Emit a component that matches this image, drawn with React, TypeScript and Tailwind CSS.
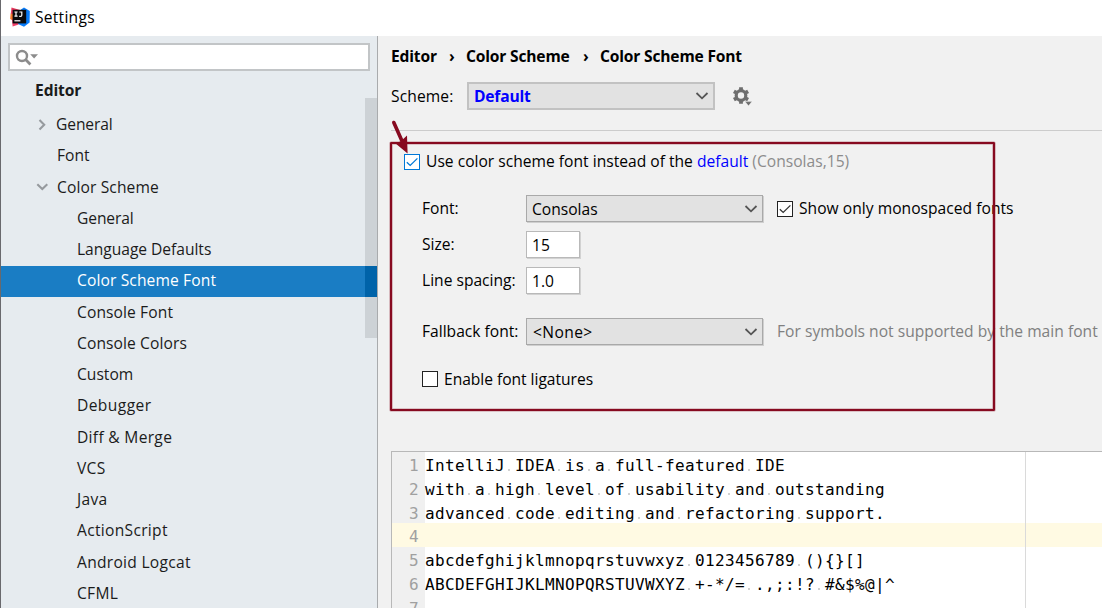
import React from 'react';

interface TreeItem {
    label: string;
    indent: string;
    arrow?: 'right' | 'down';
    selected?: boolean;
}

const treeItems: TreeItem[] = [
    { label: 'General', indent: 'pl-[55px] tracking-[-0.1px]', arrow: 'right' },
    { label: 'Font', indent: 'pl-[56px]' },
    { label: 'Color Scheme', indent: 'pl-[56px] tracking-[0.12px]', arrow: 'down' },
    { label: 'General', indent: 'pl-[76px] tracking-[-0.1px]' },
    { label: 'Language Defaults', indent: 'pl-[76px] tracking-[-0.03px]' },
    { label: 'Color Scheme Font', indent: 'pl-[76px] tracking-[0.12px]', selected: true },
    { label: 'Console Font', indent: 'pl-[76px] tracking-[0.1px]' },
    { label: 'Console Colors', indent: 'pl-[76px] tracking-[0.1px]' },
    { label: 'Custom', indent: 'pl-[76px]' },
    { label: 'Debugger', indent: 'pl-[76px] tracking-[0.4px]' },
    { label: 'Diff & Merge', indent: 'pl-[76px] tracking-[0.3px]' },
    { label: 'VCS', indent: 'pl-[76px] tracking-[0.3px]' },
    { label: 'Java', indent: 'pl-[76px] tracking-[0.3px]' },
    { label: 'ActionScript', indent: 'pl-[76px] tracking-[0.3px]' },
    { label: 'Android Logcat', indent: 'pl-[76px] tracking-[0.27px]' },
    { label: 'CFML', indent: 'pl-[76px] tracking-[0.3px]' },
];

const codeLines = [
    'IntelliJ IDEA is a full-featured IDE',
    'with a high level of usability and outstanding',
    'advanced code editing and refactoring support.',
    '',
    'abcdefghijklmnopqrstuvwxyz 0123456789 (){}[]',
    'ABCDEFGHIJKLMNOPQRSTUVWXYZ +-*/= .,;:!? #&$%@|^',
    '',
];

const Logo = () => (
    <svg width="20" height="20" viewBox="0 0 20 20" className="shrink-0">
        <path d="M1.5 0.5 L10 3 L6 10 L0.8 7 Z" fill="#e8365d" />
        <path d="M0.6 6.5 L6 8 L5 15 L0.2 12 Z" fill="#f97a2b" />
        <path d="M2 12 L11 15 L8 17.8 L2.6 19.6 Z" fill="#f0406a" />
        <path d="M11 2.5 L14 0.4 L19.8 4 L19.6 15.5 L14 19.8 L8 17 Z" fill="#087cfa" />
        <rect x="2.6" y="2.8" width="13.6" height="13.6" fill="#0b0b0d" />
        <path d="M4.4 5 H7.6 M6 5 V9.2 M4.4 9.2 H7.6 M9.4 5 H11.8 V8.2 Q11.8 9.3 10.5 9.3 H9.2" stroke="#fff" strokeWidth="1.2" fill="none" />
        <rect x="4.4" y="13.2" width="6" height="1.2" fill="#fff" />
    </svg>
);

const Chevron = ({ className }: { className: string }) => (
    <svg width="14" height="8" viewBox="0 0 14 8" className={className}>
        <path d="M1.5 1 L7 6.3 L12.5 1" fill="none" stroke="currentColor" strokeWidth="1.8" />
    </svg>
);

const TreeArrow = ({ direction }: { direction: 'right' | 'down' }) => (
    <svg width="12" height="12" viewBox="0 0 12 12" className="absolute left-[35px] top-[9px] text-[#969a9e]">
        <path
            d={direction === 'right' ? 'M3.5 1 L8.2 5.7 L3.5 10.4' : 'M1.3 3.2 L6.3 8 L11.3 3.2'}
            fill="none"
            stroke="currentColor"
            strokeWidth="2.1"
        />
    </svg>
);

const Checkbox = ({ checked, accent }: { checked?: boolean; accent?: boolean }) => (
    <span
        className={`flex h-4 w-4 shrink-0 items-center justify-center border bg-white ${
            accent ? 'border-[#0078d7] text-[#0078d7]' : 'border-[#222222] text-[#333333]'
        }`}
    >
        {checked && (
            <svg width="14" height="14" viewBox="0 0 14 14">
                <path d="M1.8 7.2 L5.2 10.4 L12.4 3.4" fill="none" stroke="currentColor" strokeWidth="1.3" />
            </svg>
        )}
    </span>
);

const Select = ({ children, className }: { children: React.ReactNode; className: string }) => (
    <div className={`flex items-center justify-between bg-[#e2e2e2] ${className}`}>
        <span>{children}</span>
        <Chevron className="text-[#555555]" />
    </div>
);

const TextField = ({ value }: { value: string }) => (
    <div className="mb-px flex h-[27px] w-[54px] items-center border border-[#b9b9b9] bg-white pl-[5px] shadow-[1px_1px_0_#d2d2d2]">
        {value}
    </div>
);

const formSelect =
    'mb-px h-[27px] w-[237px] border border-[#a9a9a9] pl-[5px] pr-[4px] shadow-[1px_1px_0_#cfcfcf]';

const Sidebar = () => (
    <aside className="relative flex w-[378px] shrink-0 flex-col overflow-hidden border-l border-r border-l-[#69696d] border-r-[#a9abad] bg-[#e6ebef] text-[#1b1b1b]">
        <div className="ml-[7px] mt-[7px] flex h-7 w-[362px] shrink-0 items-center border-2 border-[#c2c5c7] bg-white pl-[5px]">
            <svg width="24" height="17" viewBox="0 0 24 17" className="text-[#8c8c8c]">
                <circle cx="7" cy="7" r="5" fill="none" stroke="currentColor" strokeWidth="2.4" />
                <path d="M10.6 10.6 L15.4 15.4" stroke="currentColor" strokeWidth="2.8" />
                <path d="M15.2 5.2 H23 L19.1 9.4 Z" fill="currentColor" />
            </svg>
        </div>
        <div className="flex h-[38.7px] shrink-0 items-center pl-[34px] font-bold tracking-[-0.1px]">Editor</div>
        {treeItems.map((item, i) => (
            <div
                key={i}
                className={`relative flex h-[31.25px] shrink-0 items-center pb-[2.5px] ${item.indent} ${
                    item.selected ? 'bg-[#1a7dc4] text-white' : ''
                }`}
            >
                {item.arrow && <TreeArrow direction={item.arrow} />}
                {item.label}
            </div>
        ))}
        {/* Scrollbar thumb */}
        <div className="absolute right-0 top-[62px] h-[240px] w-3 bg-[#cdd2d6]">
            <div className="mt-[168px] h-[31px] bg-[#0063a9]" />
        </div>
    </aside>
);

const Breadcrumbs = () => (
    <div className="flex h-[21px] items-center pb-px font-bold tracking-[-0.18px]">
        <span className="w-[58px]">Editor</span>
        <span className="w-[17px]">›</span>
        <span className="w-[117px]">Color Scheme</span>
        <span className="w-[17px]">›</span>
        <span>Color Scheme Font</span>
    </div>
);

const FontForm = () => (
    <section className="flex flex-col pl-[13px]">
        <div className="flex h-[22px] items-center">
            <Checkbox checked accent />
            <span className="ml-[6px] whitespace-pre pb-[2px] tracking-[0.01px]">
                Use color scheme font instead of the <a className="text-[#0000ff]">default</a>
                <span className="text-[#8c8c8c]"> (Consolas,15)</span>
            </span>
        </div>
        <div className="mt-[22px] flex h-7 items-center pl-[18px]">
            <span className="w-[104px] pb-[2px]">Font:</span>
            <Select className={formSelect}>Consolas</Select>
            <span className="ml-[14px] flex items-center gap-[6px]">
                <Checkbox checked />
                <span className="pb-[2px] tracking-[0.03px]">Show only monospaced fonts</span>
            </span>
        </div>
        <div className="mt-2 flex h-7 items-center pl-[18px]">
            <span className="w-[104px] pb-[2px]">Size:</span>
            <TextField value="15" />
        </div>
        <div className="mt-2 flex h-7 items-center pl-[18px]">
            <span className="w-[104px] pb-[2px]">Line spacing:</span>
            <TextField value="1.0" />
        </div>
        <div className="mt-[23px] flex h-7 items-center pl-[18px]">
            <span className="w-[104px] pb-[2px]">Fallback font:</span>
            <Select className={formSelect}>
                <span className="ml-px tracking-[0.4px]">&lt;None&gt;</span>
            </Select>
            <span className="ml-[14px] pb-[2px] tracking-[0.02px] text-[#808080]">
                For symbols not supported by the main font
            </span>
        </div>
        <div className="mt-[22px] flex h-[22px] items-center gap-[6px] pl-[18px]">
            <Checkbox />
            <span className="tracking-[-0.03px]">Enable font ligatures</span>
        </div>
    </section>
);

const Preview = () => (
    <div className="relative mt-[61px] flex-1 overflow-hidden border-l border-t border-[#b8b8b8] bg-white font-['DejaVu_Sans_Mono',monospace] text-[16px] tracking-[0.367px] text-black">
        {codeLines.map((line, i) => (
            <div key={i} className={`flex h-[23.75px] items-center ${i === 3 ? 'bg-[#fffae3]' : ''}`}>
                <span
                    className={`flex h-full w-[33px] shrink-0 items-center justify-end pr-[6px] pt-[4.5px] text-[#a0a0a0] ${
                        i === 3 ? '' : 'bg-[#f0f0f0]'
                    }`}
                >
                    {i + 1}
                </span>
                <span className="whitespace-pre pt-[4.5px]">
                    {line.split(' ').map((word, w) => (
                        <React.Fragment key={w}>
                            {w > 0 && (
                                <span className="bg-[radial-gradient(circle_at_4px_14px,#b8b8b8_0.6px,transparent_0.9px)]"> </span>
                            )}
                            {word}
                        </React.Fragment>
                    ))}
                </span>
            </div>
        ))}
        {/* Right margin guide */}
        <div className="absolute bottom-0 left-[633px] top-0 w-px bg-[#dadada]" />
    </div>
);

// Hand-drawn marker around the font options
const Highlight = () => (
    <>
        <div className="absolute left-[390px] top-[142px] h-[269px] w-[605px] rounded-[1px] border-2 border-[#870a20] shadow-[0_0_0_0.6px_#870a2066,inset_0_0_0_0.6px_#870a2066]" />
        <svg width="24" height="36" viewBox="0 0 24 36" className="absolute left-[390px] top-[119px]">
            <path d="M3.8 3.5 L12 22" stroke="#870a20" strokeWidth="3.6" strokeLinecap="round" />
            <path d="M17.6 34.5 L5 24 L10.5 22.5 L17 16.5 Z" fill="#870a20" />
        </svg>
    </>
);

const App: React.FC = () => (
    <div className="relative flex h-[608px] w-[1102px] flex-col overflow-hidden whitespace-nowrap bg-[#f1f1f1] font-['Open_Sans','Noto_Sans',sans-serif] text-[15.6px] leading-5 text-black">
        <header className="flex h-9 shrink-0 items-center gap-[5px] border-l border-[#69696d] bg-white pb-[2px] pl-[9px]">
            <Logo />
            <span className="tracking-[0.25px]">Settings</span>
        </header>
        <div className="flex min-h-0 flex-1">
            <Sidebar />
            <main className="flex min-w-0 flex-1 flex-col pl-[13px] pt-[10px]">
                <Breadcrumbs />
                <div className="mt-[15px] flex h-7 items-center">
                    <span className="w-[76px] tracking-[0.1px]">Scheme:</span>
                    <Select className="h-7 w-[248px] border-2 border-[#c2c2c2] pl-[5px] pr-[4px] font-bold tracking-[-0.2px] text-[#0000ff]">
                        Default
                    </Select>
                    <svg width="22" height="22" viewBox="0 0 22 22" className="ml-[17px] text-[#6e6e6e]">
                        <circle cx="9" cy="10.5" r="4.8" fill="none" stroke="currentColor" strokeWidth="3.2" />
                        <path
                            d="M9 2.3 V5 M9 16 V18.7 M1.9 6.4 L4.3 7.7 M13.7 13.3 L16.1 14.6 M1.9 14.6 L4.3 13.3 M13.7 7.7 L16.1 6.4"
                            stroke="currentColor"
                            strokeWidth="3.8"
                        />
                        <path d="M13 16.6 H20 L16.5 20.8 Z" fill="currentColor" stroke="#f1f1f1" strokeWidth="0.4" />
                    </svg>
                </div>
                <div className="mb-5 mt-5 h-px shrink-0 bg-[#cccccc]" />
                <FontForm />
                <Preview />
            </main>
        </div>
        <Highlight />
    </div>
);

export default App;
